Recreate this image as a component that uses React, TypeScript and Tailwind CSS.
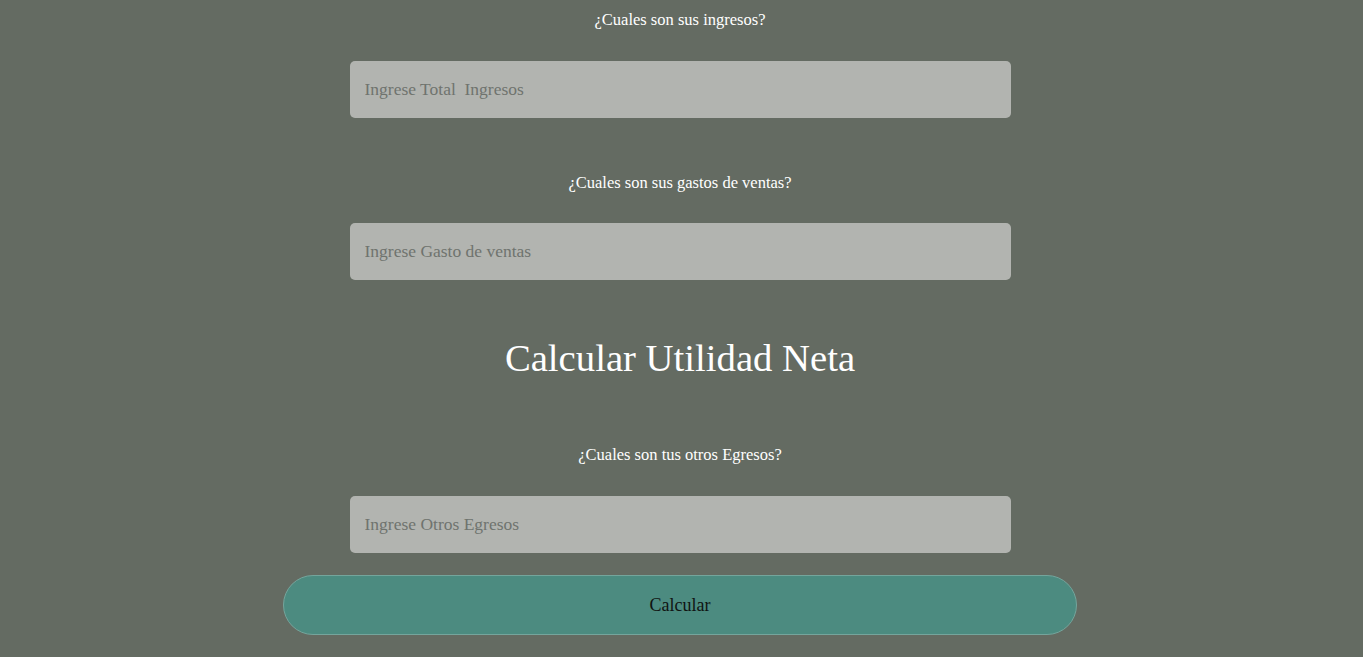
export default function App() {
  const label = "text-white text-[16.5px] leading-[18px] text-center";
  const input =
    "w-[661px] h-[57px] rounded-[5px] bg-[#b2b4b0] px-[15px] text-[17.5px] text-[#3a3d39] placeholder:text-[#6f736e] outline-none";

  return (
    <main
      className="min-h-screen bg-[#646b62] flex flex-col items-center pr-[3px]"
      style={{ fontFamily: '"Liberation Serif", "Times New Roman", serif' }}
    >
      <p className={`${label} mt-[11px]`}>¿Cuales son sus ingresos?</p>
      <input className={`${input} mt-[32px]`} placeholder="Ingrese Total  Ingresos" />

      <p className={`${label} mt-[56px]`}>¿Cuales son sus gastos de ventas?</p>
      <input className={`${input} mt-[31px]`} placeholder="Ingrese Gasto de ventas" />

      <h1 className="text-white text-[38.7px] leading-[46px] mt-[55px]">
        Calcular Utilidad Neta
      </h1>

      <p className={`${label} mt-[65px]`}>¿Cuales son tus otros Egresos?</p>
      <input className={`${input} mt-[32px]`} placeholder="Ingrese Otros Egresos" />

      <button className="mt-[22px] w-[794px] h-[60px] rounded-full bg-[#4c8b80] border border-[#74a59c] text-[#101412] text-[18px]">
        Calcular
      </button>
      <div className="h-[22px]" />
    </main>
  );
}
